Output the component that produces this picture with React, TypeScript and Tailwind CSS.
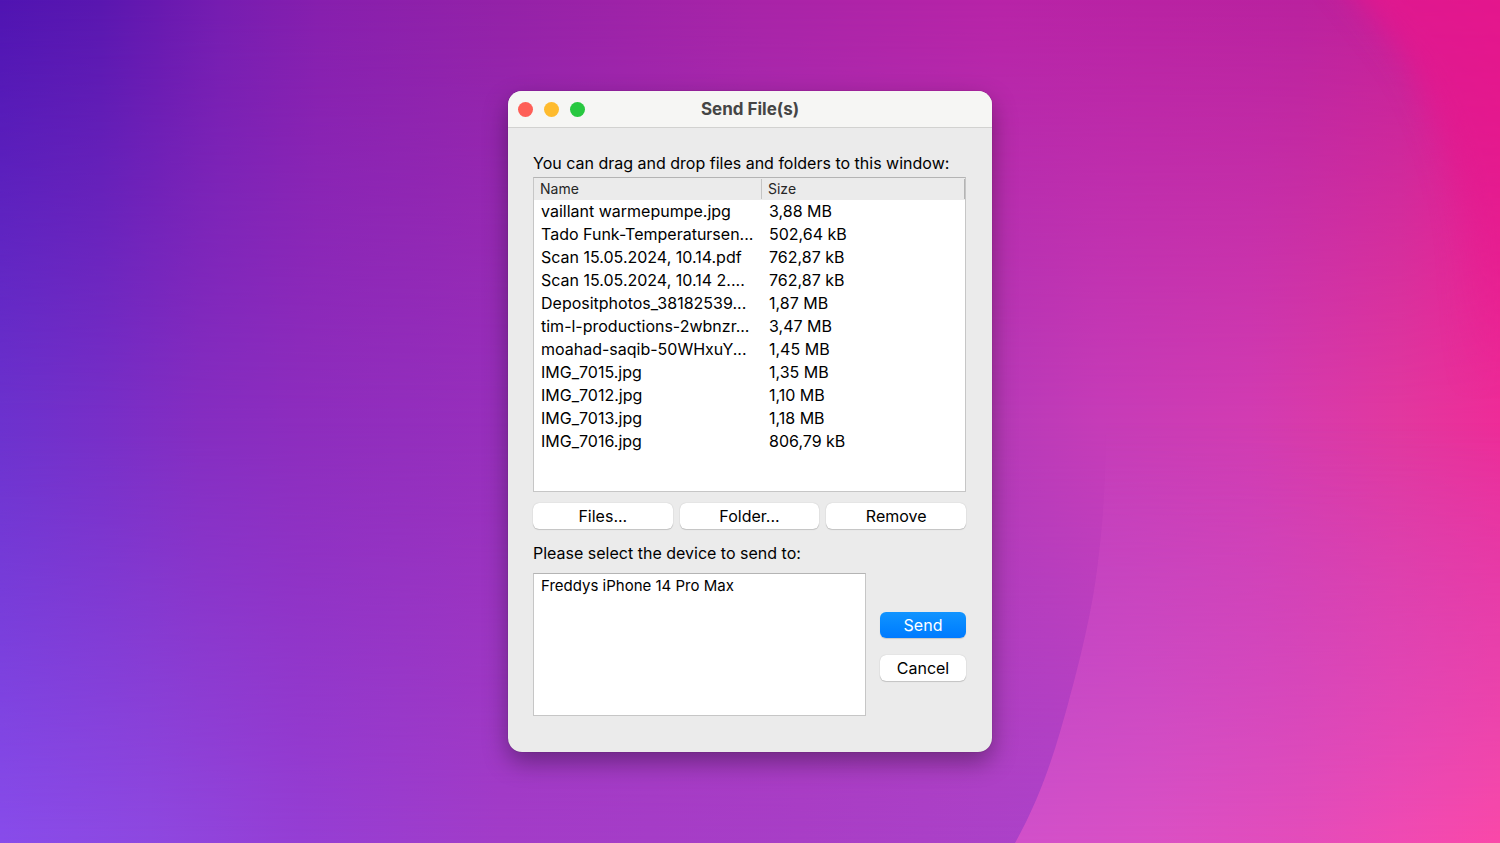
import React from "react";

type FileEntry = { name: string; size: string };

const files: FileEntry[] = [
  { name: "vaillant warmepumpe.jpg", size: "3,88 MB" },
  { name: "Tado Funk-Temperatursen...", size: "502,64 kB" },
  { name: "Scan 15.05.2024, 10.14.pdf", size: "762,87 kB" },
  { name: "Scan 15.05.2024, 10.14 2....", size: "762,87 kB" },
  { name: "Depositphotos_38182539...", size: "1,87 MB" },
  { name: "tim-l-productions-2wbnzr...", size: "3,47 MB" },
  { name: "moahad-saqib-50WHxuY...", size: "1,45 MB" },
  { name: "IMG_7015.jpg", size: "1,35 MB" },
  { name: "IMG_7012.jpg", size: "1,10 MB" },
  { name: "IMG_7013.jpg", size: "1,18 MB" },
  { name: "IMG_7016.jpg", size: "806,79 kB" },
];

type Stop = [number, string];

function Row({ id, stops }: { id: string; stops: Stop[] }) {
  return (
    <linearGradient id={id} gradientUnits="userSpaceOnUse" x1="0" y1="0" x2="1500" y2="0">
      {stops.map(([x, color]) => (
        <stop key={x} offset={x / 1500} stopColor={color} />
      ))}
    </linearGradient>
  );
}

function Fade({ id, stops }: { id: string; stops: [number, number][] }) {
  return (
    <>
      <linearGradient id={`${id}-ramp`} gradientUnits="userSpaceOnUse" x1="0" y1="0" x2="0" y2="843">
        {stops.map(([y, opacity]) => (
          <stop key={y} offset={y / 843} stopColor="#fff" stopOpacity={opacity} />
        ))}
      </linearGradient>
      <mask id={id} maskUnits="userSpaceOnUse" x="0" y="0" width="1500" height="843">
        <rect width="1500" height="843" fill={`url(#${id}-ramp)`} />
      </mask>
    </>
  );
}

function Wallpaper() {
  return (
    <svg
      className="absolute inset-0 h-full w-full"
      viewBox="0 0 1500 843"
      preserveAspectRatio="none"
      aria-hidden="true"
    >
      <defs>
        <Row
          id="top"
          stops={[
            [0, "#5014b2"],
            [100, "#5a17b0"],
            [160, "#6819b0"],
            [220, "#761db1"],
            [320, "#871fae"],
            [500, "#9422a8"],
            [750, "#a824a8"],
            [1000, "#b824a8"],
            [1300, "#ba229f"],
            [1400, "#c4209a"],
            [1500, "#e2168c"],
          ]}
        />
        <Row
          id="middle"
          stops={[
            [0, "#6c32ce"],
            [100, "#772fc8"],
            [200, "#852dc1"],
            [300, "#8d2dbe"],
            [500, "#982fbc"],
            [1000, "#b83ab8"],
            [1100, "#c63cb8"],
            [1250, "#d23cb2"],
            [1400, "#e2389f"],
            [1500, "#ee2c98"],
          ]}
        />
        <Row
          id="bottom"
          stops={[
            [0, "#884cea"],
            [150, "#8e48e0"],
            [300, "#953ed4"],
            [500, "#a23cc8"],
            [800, "#a83ec6"],
            [1050, "#ac42c8"],
            [1500, "#c040c0"],
          ]}
        />
        <Row
          id="glow"
          stops={[
            [1000, "#d050ca"],
            [1150, "#da50c4"],
            [1300, "#e44cba"],
            [1400, "#f04ab2"],
            [1500, "#fa48a8"],
          ]}
        />
        <Fade id="middle-fade" stops={[[0, 0], [422, 1]]} />
        <Fade id="bottom-fade" stops={[[422, 0], [843, 1]]} />
        <Fade id="corner-fade" stops={[[0, 0.85], [120, 0.7], [400, 0]]} />
        <filter
          id="soften"
          filterUnits="userSpaceOnUse"
          x="1200"
          y="-200"
          width="600"
          height="900"
          colorInterpolationFilters="sRGB"
        >
          <feGaussianBlur stdDeviation="14" />
        </filter>
      </defs>
      <rect width="1500" height="843" fill="url(#top)" />
      <rect width="1500" height="843" fill="url(#middle)" mask="url(#middle-fade)" />
      <rect width="1500" height="843" fill="url(#bottom)" mask="url(#bottom-fade)" />
      <path
        d="M1015 843C1043 793 1057 744 1068 704C1080 661 1092 610 1097 570C1102 530 1106 490 1106 422H1500V843Z"
        fill="url(#glow)"
        mask="url(#bottom-fade)"
      />
      <g mask="url(#corner-fade)">
        <path
          d="M1270 -100C1325 -40 1370 10 1405 60C1440 115 1462 190 1466 260C1470 350 1474 450 1474 600H1700V-100Z"
          fill="#e4178d"
          filter="url(#soften)"
        />
      </g>
    </svg>
  );
}

function PushButton({ children, primary = false }: { children: React.ReactNode; primary?: boolean }) {
  return (
    <button
      type="button"
      className={
        primary
          ? "h-[26px] w-full rounded-md bg-linear-to-b from-[#1294ff] to-[#007aff] text-white shadow-[0_1px_1px_rgba(0,0,0,0.15)]"
          : "h-[26px] w-full rounded-md bg-white text-black shadow-[0_0_1px_rgba(0,0,0,0.25),0_1px_1px_rgba(0,0,0,0.15)]"
      }
    >
      {children}
    </button>
  );
}

export default function App() {
  return (
    <main className="relative flex min-h-screen items-center justify-center overflow-hidden font-['Inter',sans-serif] text-base leading-6 text-black">
      <Wallpaper />
      <section
        aria-labelledby="window-title"
        className="relative w-full max-w-[484px] overflow-hidden rounded-[14px] bg-[#ebebeb] shadow-[0_0_1px_rgba(0,0,0,0.4),0_10px_24px_rgba(0,0,0,0.35)]"
      >
        <header className="grid h-[37px] grid-cols-[1fr_auto_1fr] items-center border-b border-[#d2d2d0] bg-[#f6f6f4] px-2.5">
          <div className="flex gap-[11px]">
            <button type="button" aria-label="Close" className="size-[15px] rounded-full bg-[#fe5f57]" />
            <button type="button" aria-label="Minimize" className="size-[15px] rounded-full bg-[#febb2e]" />
            <button type="button" aria-label="Zoom" className="size-[15px] rounded-full bg-[#28c840]" />
          </div>
          <h1 id="window-title" className="text-[17px] leading-6 font-bold text-[#454545]">
            Send File(s)
          </h1>
        </header>

        <div className="pt-[23px] pr-[26px] pb-9 pl-[25px]">
          <p id="files-label">You can drag and drop files and folders to this window:</p>

          <div className="mt-0.5 h-[315px] border border-[#c6c6c6] border-t-[#b4b4b4] bg-white">
            <table aria-labelledby="files-label" className="w-full table-fixed border-collapse">
              <thead className="bg-[#ebebeb] text-left text-sm leading-5 text-[#262626]">
                <tr className="h-[22px]">
                  <th scope="col" className="w-[228px] p-0 font-normal">
                    <div className="border-r border-[#c4c4c4] pl-1.5">Name</div>
                  </th>
                  <th scope="col" className="p-0 font-normal">
                    <div className="border-r border-[#b4b4b4] pl-1.5">Size</div>
                  </th>
                </tr>
              </thead>
              <tbody className="leading-[23px]">
                {files.map((file) => (
                  <tr key={file.name}>
                    <td className="py-0 pl-[7px] whitespace-nowrap">{file.name}</td>
                    <td className="py-0 pl-[7px] whitespace-nowrap">{file.size}</td>
                  </tr>
                ))}
              </tbody>
            </table>
          </div>

          <div className="mt-[11px] grid grid-cols-3 gap-[7px]">
            <PushButton>Files...</PushButton>
            <PushButton>Folder...</PushButton>
            <PushButton>Remove</PushButton>
          </div>

          <label htmlFor="device" className="mt-3 block">
            Please select the device to send to:
          </label>
          <div className="mt-2 flex items-center gap-3.5">
            <select
              id="device"
              size={5}
              className="h-[143px] min-w-0 flex-1 appearance-none overflow-hidden border border-[#c6c6c6] border-t-[#b4b4b4] bg-white text-[15px] outline-none"
            >
              <option className="px-[7px] py-0.5 leading-5">Freddys iPhone 14 Pro Max</option>
            </select>
            <div className="flex w-[86px] flex-col gap-[17px] pt-1">
              <PushButton primary>Send</PushButton>
              <PushButton>Cancel</PushButton>
            </div>
          </div>
        </div>
      </section>
    </main>
  );
}
